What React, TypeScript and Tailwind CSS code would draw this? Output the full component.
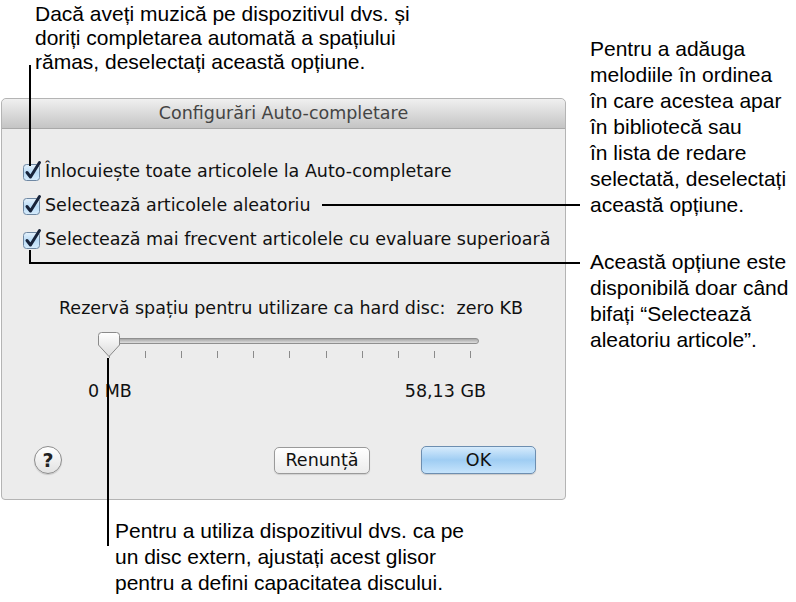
function CheckBox() {
  return (
    <svg width="22" height="22" viewBox="0 0 22 22" className="shrink-0">
      <defs>
        <linearGradient id="cbg" x1="0" y1="0" x2="0" y2="1">
          <stop offset="0" stopColor="#e6f2fc" />
          <stop offset="0.5" stopColor="#b9dbf6" />
          <stop offset="1" stopColor="#d7ecfc" />
        </linearGradient>
      </defs>
      <rect x="1.5" y="4.5" width="16" height="16" rx="3" fill="url(#cbg)" stroke="#6f88a3" />
      <path d="M5 12.5 L8.5 17 L17.5 2.5" fill="none" stroke="#17233a" strokeWidth="3" strokeLinecap="round" strokeLinejoin="round" />
    </svg>
  )
}

function SliderThumb() {
  return (
    <svg width="24" height="26" viewBox="0 0 24 26">
      <defs>
        <linearGradient id="thg" x1="0" y1="0" x2="0" y2="1">
          <stop offset="0" stopColor="#ffffff" />
          <stop offset="1" stopColor="#dcdcdc" />
        </linearGradient>
      </defs>
      <path d="M4.5 0.5 H19.5 Q22.5 0.5 22.5 3.5 V13 L12 24.5 L1.5 13 V3.5 Q1.5 0.5 4.5 0.5 Z" fill="url(#thg)" stroke="#8a8a8a" />
    </svg>
  )
}

const options = [
  'Înlocuiește toate articolele la Auto-completare',
  'Selectează articolele aleatoriu',
  'Selectează mai frecvent articolele cu evaluare superioară',
]

const ticks = [0, 1, 2, 3, 4, 5, 6, 7, 8, 9, 10]

export default function App() {
  return (
    <div className="relative w-[796px] h-[602px] bg-white overflow-hidden text-black">
      <div className="flex">
        {/* left: top note, dialog, bottom note */}
        <div className="w-[580px] shrink-0">
          <div className="pl-[35px] pt-[2px] text-[21px] leading-[24px] font-['Liberation_Sans',sans-serif]">
            <div>Dacă aveți muzică pe dispozitivul dvs. și</div>
            <div>doriți completarea automată a spațiului</div>
            <div>rămas, deselectați această opțiune.</div>
          </div>

          <div className="ml-[1px] mt-[24px] w-[565px] h-[402px] rounded-t-[5px] rounded-b-[4px] border border-[#b4b4b4] bg-[#ececec] flex flex-col font-['DejaVu_Sans',sans-serif] text-[17.5px] text-[#111]">
            <div className="h-[30px] shrink-0 rounded-t-[5px] border-b border-[#a9a9a9] bg-gradient-to-b from-[#f0f0f0] to-[#c4c4c4] flex items-center justify-center text-[17.5px] text-[#444]">
              Configurări Auto-completare
            </div>

            <div className="pt-[25px] pl-[20px] flex flex-col">
              {options.map((o) => (
                <div key={o} className="h-[34px] flex items-center gap-[1px]">
                  <CheckBox />
                  <span className="mt-[1px]">{o}</span>
                </div>
              ))}
            </div>

            <div className="mt-[41px] pl-[57px] h-[22px] flex items-center">
              Rezervă spațiu pentru utilizare ca hard disc:&nbsp; zero KB
            </div>

            {/* slider */}
            <div className="mt-[13px] ml-[95px] w-[384px] relative h-[26px]">
              <div className="absolute left-[4px] right-[2px] top-[6px] h-[6px] rounded-full border border-[#8f8f8f] bg-gradient-to-b from-[#a6a6a6] to-[#dedede]" />
              <div className="absolute left-0 top-0">
                <SliderThumb />
              </div>
            </div>
            <div className="ml-[107px] w-[362px] flex justify-between h-[8px] -mt-[7px]">
              {ticks.map((t) => (
                <div key={t} className="w-[1px] h-[7px] bg-[#8a8a8a]" />
              ))}
            </div>

            <div className="mt-[22px] h-[20px] flex items-center">
              <span className="ml-[86px]">0 MB</span>
              <span className="ml-auto mr-[79px]">58,13 GB</span>
            </div>

            <div className="mt-[45px] flex items-center">
              <div className="ml-[32px] w-[28px] h-[28px] rounded-full border border-[#8c8c8c] bg-gradient-to-b from-[#ffffff] to-[#e2e2e2] flex items-center justify-center text-[19px] font-bold text-[#222] shadow-[0_1px_1px_rgba(0,0,0,0.15)]">
                ?
              </div>
              <div className="ml-[212px] w-[96px] h-[27px] rounded-[5px] border border-[#9a9a9a] bg-gradient-to-b from-[#ffffff] to-[#ececec] flex items-center justify-center shadow-[0_1px_1px_rgba(0,0,0,0.12)]">
                Renunță
              </div>
              <div className="ml-[51px] w-[115px] h-[28px] rounded-[5px] border border-[#6d8eb0] bg-gradient-to-b from-[#d6ebfc] via-[#9fcdf3] to-[#c6e4fc] flex items-center justify-center shadow-[0_1px_1px_rgba(0,0,0,0.15)]">
                OK
              </div>
            </div>
          </div>

          <div className="pl-[115px] mt-[18px] text-[21px] leading-[26px] font-['Liberation_Sans',sans-serif]">
            <div>Pentru a utiliza dispozitivul dvs. ca pe</div>
            <div>un disc extern, ajustați acest glisor</div>
            <div>pentru a defini capacitatea discului.</div>
          </div>
        </div>

        {/* right notes */}
        <div className="pl-[10px] pt-[36px] text-[21px] leading-[26px] font-['Liberation_Sans',sans-serif] whitespace-nowrap">
          <div>Pentru a adăuga</div>
          <div>melodiile în ordinea</div>
          <div>în care acestea apar</div>
          <div>în bibliotecă sau</div>
          <div>în lista de redare</div>
          <div>selectată, deselectați</div>
          <div>această opțiune.</div>
          <div className="mt-[31px]">Această opțiune este</div>
          <div>disponibilă doar când</div>
          <div>bifați “Selectează</div>
          <div>aleatoriu articole”.</div>
        </div>
      </div>

      {/* callout lines */}
      <svg className="absolute inset-0 pointer-events-none" width="796" height="602">
        <g fill="none" stroke="#000" strokeWidth="2">
          <path d="M30 65 V166" />
          <path d="M322 205 H580" />
          <path d="M30 250 V263 H580" />
          <path d="M108 358 V546" />
        </g>
      </svg>
    </div>
  )
}
